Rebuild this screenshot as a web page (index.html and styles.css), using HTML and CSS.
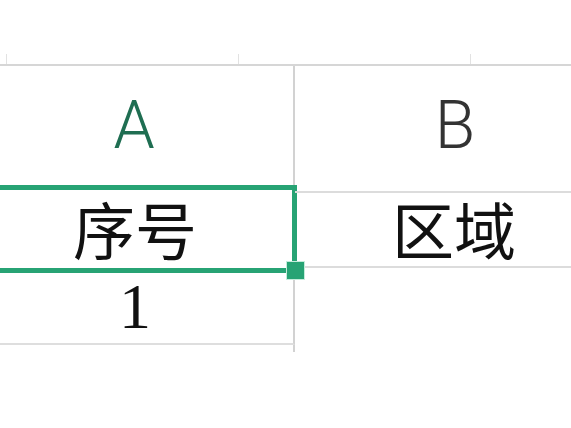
FILE: index.html
```html
<!DOCTYPE html>
<html lang="zh-CN">
<head>
    <meta charset="UTF-8">
    <meta name="viewport" content="width=device-width, initial-scale=1.0">
    <title>表格</title>
    <link rel="stylesheet" href="styles.css">
</head>
<body>
    <div class="sheet">
        <!-- ruler strip above the column headers -->
        <div class="ruler">
            <span class="tick first"></span>
            <span class="tick"></span>
            <span class="tick"></span>
            <span class="tick"></span>
        </div>

        <div class="grid">
            <div class="col-head active">A</div>
            <div class="col-head">B</div>

            <div class="cell a selected">
                序号
                <span class="sel-frame"></span>
                <span class="fill-handle"></span>
            </div>
            <div class="cell b">区域</div>

            <div class="cell a num">1</div>
            <div class="cell b empty"></div>

            <div class="cell a tail"></div>
            <div class="cell b empty"></div>
        </div>
    </div>
</body>
</html>
```

FILE: styles.css
```css
/* Spreadsheet close-up */
body {
    margin: 0;
    background: #fff;
    overflow: hidden;
    font-family: 'Noto Sans CJK SC', sans-serif;
}

.sheet {
    width: 571px;
    height: 428px;
    overflow: hidden;
}

.ruler {
    display: flex;
    align-items: flex-end;
    height: 66px;
    border-bottom: 2px solid #d6d6d6;
    box-sizing: border-box;
}

.tick {
    flex: 0 0 232px;
    height: 10px;
    border-right: 1px solid #e2e2e2;
    box-sizing: border-box;
}

.tick.first {
    flex-basis: 7px;
}

.grid {
    display: grid;
    grid-template-columns: 320px 320px;
    grid-template-rows: 125px 77px 77px 7px;
    margin-left: -25px;
}

.col-head {
    display: flex;
    justify-content: center;
    align-items: center;
    font-family: Roboto, sans-serif;
    font-weight: 300;
    font-size: 66px;
    color: #333;
    padding-bottom: 6px;
}

.col-head:first-child {
    border-right: 2px solid #d2d2d2;
}

.col-head.active {
    color: #1f6e52;
}

.cell {
    position: relative;
    display: flex;
    justify-content: center;
    align-items: center;
    font-size: 62px;
    color: #111;
    box-sizing: border-box;
}

.cell.a {
    border-right: 2px solid #d2d2d2;
    padding-left: 2px;
}

.cell.selected {
    padding-bottom: 4px;
}

.cell.b {
    border-top: 2px solid #dcdcdc;
    border-bottom: 2px solid #dcdcdc;
    padding-right: 2px;
    padding-bottom: 4px;
}

.cell.b.empty {
    border: none;
}

.cell.num {
    font-family: 'Liberation Serif', serif;
    font-size: 64px;
    border-bottom: 2px solid #dedede;
    padding-top: 2px;
}

.sel-frame {
    position: absolute;
    left: 0;
    top: -6px;
    right: -4px;
    bottom: -5px;
    border: 5px solid #27a374;
}

.fill-handle {
    position: absolute;
    z-index: 1;
    right: -12px;
    bottom: -12px;
    width: 17px;
    height: 17px;
    background: #27a374;
    border: 1px solid #c4ecdb;
}
```
